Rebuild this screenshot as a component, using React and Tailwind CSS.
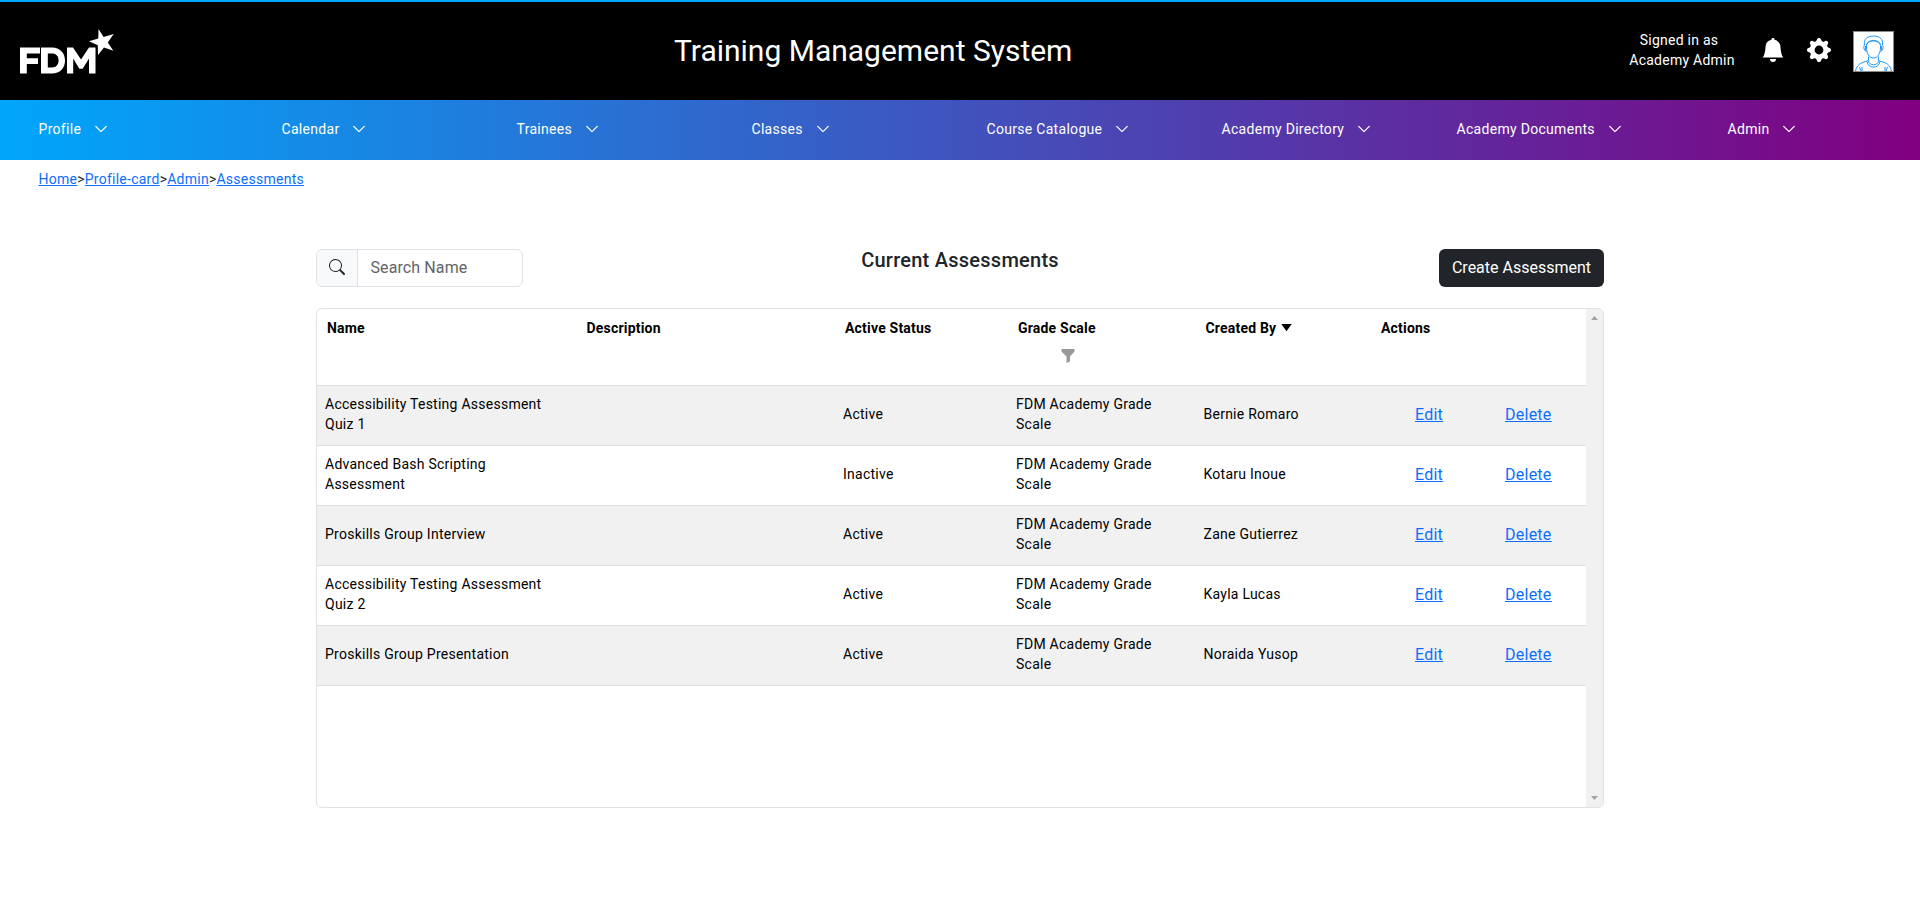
const NAV = [
  ['Profile', 'w-[243px]'],
  ['Calendar', 'w-[235px]'],
  ['Trainees', 'w-[235px]'],
  ['Classes', 'w-[235px]'],
  ['Course Catalogue', 'w-[235px]'],
  ['Academy Directory', 'w-[235px]'],
  ['Academy Documents', 'w-[271px]'],
  ['Admin', ''],
];

const ROWS = [
  ['Accessibility Testing Assessment Quiz 1', 'Active', 'Bernie Romaro'],
  ['Advanced Bash Scripting Assessment', 'Inactive', 'Kotaru Inoue'],
  ['Proskills Group Interview', 'Active', 'Zane Gutierrez'],
  ['Accessibility Testing Assessment Quiz 2', 'Active', 'Kayla Lucas'],
  ['Proskills Group Presentation', 'Active', 'Noraida Yusop'],
];

const COLS = 'grid grid-cols-[259.5px_258.5px_173px_187.5px_175.5px_215px]';

function Bootstrap({ size, className, children }) {
  return (
    <svg width={size} height={size} viewBox="0 0 16 16" fill="currentColor" className={className}>
      {children}
    </svg>
  );
}

function Logo() {
  return (
    <svg width="96" height="48" viewBox="0 0 96 48" className="mt-0.5 shrink-0" fill="#fff">
      <path d="M0 19.5H20V25.6H6.8V30.2H18V36H6.8V45.6H0Z" />
      <path fillRule="evenodd" d="M21 19.5H32C40 19.5 45 25 45 32.5S40 45.6 32 45.6H21ZM27.8 25.6V39.5H32C36 39.5 38.6 36.7 38.6 32.5S36 25.6 32 25.6Z" />
      <path d="M47 45.6V19.5H53L61 31.5L69 19.5H75.5V45.6H69V30.5L62.7 40.8H59.3L53.2 30.5V45.6Z" />
      <path d="M78.5 1L83.6 9L93.7 6L87.8 14.5L93.3 22.8L84 19.5L78 27L77.8 17.2L69 13.3L78.3 10.5Z" />
    </svg>
  );
}

function Avatar() {
  return (
    <svg width="41" height="41" viewBox="0 0 41 41" fill="none" stroke="#1e96f5" strokeWidth="1">
      <rect x="0.5" y="0.5" width="40" height="40" fill="#fff" stroke="#8a8a8a" />
      <path d="M11.5 14C10.500 8 14.500 5 20.500 5S30.500 8 29.500 14" />
      <path d="M13.500 16C13 12 16 9.500 20.500 9.500S28 12 27.500 16C27.500 22 25 27 20.500 27S13.500 22 13.500 16Z" />
      <path d="M13.500 14C15 8.500 26 8.500 27.500 14" />
      <path d="M12 14C10 14 10.500 20 13.500 20.500M29 14C31 14 30.500 20 27.500 20.500M12.500 15V19.500M28.500 15V19.500" />
      <path d="M15.500 25.500V29.500C12 31 4 31.500 2.500 40M25.500 25.500V29.500C29 31 37 31.500 38.500 40" />
      <path d="M15.500 30C16 35 25 35 25.500 30M14 30.500C15 38 26 38 27 30.500M9 36V40M32 36V40M6.500 36L8 40M34.500 36L33 40" />
    </svg>
  );
}

function Header() {
  return (
    <header className="flex h-[100px] items-center border-t-2 border-[#00a3ff] bg-black text-white">
      <div className="flex w-[674px] pl-5">
        <Logo />
      </div>
      <h1 className="w-[951px] text-[30px] leading-9 font-normal whitespace-nowrap">Training Management System</h1>
      <div className="flex items-center">
        <div className="w-[114px] pb-0.5 text-center text-sm leading-5 tracking-[0.25px]">
          <span className="pr-1.5">Signed in as</span>
          <br />
          Academy Admin
        </div>
        <Bootstrap size={24} className="mb-0.5 ml-[22px]">
          <path d="M8 16a2 2 0 0 0 2-2H6a2 2 0 0 0 2 2m.995-14.901a1 1 0 1 0-1.99 0A5 5 0 0 0 3 6c0 1.098-.5 6-2 7h14c-1.500-1-2-5.902-2-7 0-2.420-1.720-4.440-4.005-4.901" />
        </Bootstrap>
        <Bootstrap size={24} className="mb-0.5 ml-[22px]">
          <path d="M9.405 1.050c-.413-1.400-2.397-1.400-2.810 0l-.1.340a1.464 1.464 0 0 1-2.105.872l-.310-.170c-1.283-.698-2.686.705-1.987 1.987l.169.311c.446.820.023 1.841-.872 2.105l-.340.100c-1.400.413-1.400 2.397 0 2.810l.340.100a1.464 1.464 0 0 1 .872 2.105l-.170.310c-.698 1.283.705 2.686 1.987 1.987l.311-.169a1.464 1.464 0 0 1 2.105.872l.100.340c.413 1.400 2.397 1.400 2.810 0l.100-.340a1.464 1.464 0 0 1 2.105-.872l.310.170c1.283.698 2.686-.705 1.987-1.987l-.169-.311a1.464 1.464 0 0 1 .872-2.105l.340-.100c1.400-.413 1.400-2.397 0-2.810l-.340-.100a1.464 1.464 0 0 1-.872-2.105l.170-.310c.698-1.283-.705-2.686-1.987-1.987l-.311.169a1.464 1.464 0 0 1-2.105-.872zM8 10.930a2.929 2.929 0 1 1 0-5.860 2.929 2.929 0 0 1 0 5.858z" />
        </Bootstrap>
        <div className="ml-[22px]">
          <Avatar />
        </div>
      </div>
    </header>
  );
}

function Nav() {
  return (
    <nav className="flex h-[60px] items-center bg-[linear-gradient(90deg,#00a6fb,#800080)] pb-0.5 pl-[38.5px] text-sm tracking-[0.3px] text-white">
      {NAV.map(([label, width]) => (
        <div key={label} className={`flex shrink-0 items-center whitespace-nowrap ${width}`}>
          {label}
          <Bootstrap size={14} className="ml-[13px]">
            <path fillRule="evenodd" stroke="currentColor" strokeWidth="0.4" d="M1.646 4.646a.5.5 0 0 1 .708 0L8 10.293l5.646-5.647a.5.5 0 0 1 .708.708l-6 6a.5.5 0 0 1-.708 0l-6-6a.5.5 0 0 1 0-.708" />
          </Bootstrap>
        </div>
      ))}
    </nav>
  );
}

function Crumbs() {
  return (
    <div className="flex h-[89px] pt-[9px] pl-[38.5px] text-sm leading-[21px] tracking-[0.25px] text-[#212529]">
      <a className="text-[#0d6efd] underline">Home</a>
      <span>&gt;</span>
      <a className="text-[#0d6efd] underline">Profile-card</a>
      <span>&gt;</span>
      <a className="text-[#0d6efd] underline">Admin</a>
      <span>&gt;</span>
      <a className="text-[#0d6efd] underline">Assessments</a>
    </div>
  );
}

function Toolbar() {
  return (
    <div className="grid h-[59px] grid-cols-3 items-start">
      <div className="flex h-[38px] w-[207px] overflow-hidden rounded-md border border-[#dee2e6]">
        <div className="flex w-[41px] items-center justify-center border-r border-[#dee2e6] bg-[#f8f9fa] text-[#212529]">
          <Bootstrap size={16} className="mb-0.5">
            <path d="M11.742 10.344a6.500 6.500 0 1 0-1.397 1.398h-.001q.044.060.098.115l3.850 3.850a1 1 0 0 0 1.415-1.414l-3.850-3.850a1 1 0 0 0-.115-.1zM12 6.500a5.500 5.500 0 1 1-11 0 5.500 5.500 0 0 1 11 0" />
          </Bootstrap>
        </div>
        <span className="pl-[12.5px] text-base leading-[35px] tracking-[0.1px] text-[#5f6469]">Search Name</span>
      </div>
      <h2 className="text-center text-xl leading-[22px] font-medium tracking-[0.25px] text-[#212529]">Current Assessments</h2>
      <button className="h-[38px] w-[165px] justify-self-end rounded-md bg-[#212529] text-base text-white">Create Assessment</button>
    </div>
  );
}

function Table() {
  return (
    <section className="flex h-[500px] overflow-hidden rounded-md border border-[#dee2e6] text-sm text-black">
      <div className="flex-1">
        <div className={`${COLS} h-[77px] border-b border-[#dedede] pt-[9px] leading-5 font-bold tracking-[0.2px]`}>
          <div className="pl-2.5">Name</div>
          <div className="pl-2.5">Description</div>
          <div className="pl-2.5">Active Status</div>
          <div className="pl-2.5">
            Grade Scale
            <svg width="14" height="14" viewBox="0 0 14 14" className="mt-[11px] ml-[43px]" fill="#999">
              <path d="M0.500 0H13.500V2.500L9 7.500V12.500L5.500 14V7.500L0.500 2.500Z" />
            </svg>
          </div>
          <div className="flex pl-2.5">
            Created By
            <svg width="11" height="8" viewBox="0 0 11 8" className="mt-1.5 ml-[5px]">
              <path d="M0.300 0H10.700L5.500 7.200Z" />
            </svg>
          </div>
          <div className="pl-2.5">Actions</div>
        </div>
        {ROWS.map(([name, status, author]) => (
          <div key={name} className={`${COLS} h-[60px] items-center border-b border-[#dedede] pb-[3px] leading-5 tracking-[0.25px] odd:bg-white even:bg-[#f1f1f1]`}>
            <div className="pr-6 pl-2">{name}</div>
            <div />
            <div className="pl-2">{status}</div>
            <div className="pr-8 pl-2">FDM Academy Grade Scale</div>
            <div className="pl-2">{author}</div>
            <div className="flex pt-px pl-[44px] text-base leading-5 text-[#0d6efd] underline">
              <a className="w-[90px]">Edit</a>
              <a>Delete</a>
            </div>
          </div>
        ))}
      </div>
      <div className="flex w-[17px] flex-col items-center justify-between bg-[#f1f1f1] py-[7px]">
        <svg width="7" height="4" viewBox="0 0 7 4" fill="#a3a3a3">
          <path d="M0 4H7L3.500 0Z" />
        </svg>
        <svg width="7" height="4" viewBox="0 0 7 4" fill="#a3a3a3">
          <path d="M0 0H7L3.500 4Z" />
        </svg>
      </div>
    </section>
  );
}

export default function App() {
  return (
    <div className="h-[911px] w-[1920px] overflow-hidden bg-white font-[Roboto,sans-serif]">
      <Header />
      <Nav />
      <Crumbs />
      <main className="mx-auto w-[1288px]">
        <Toolbar />
        <Table />
      </main>
    </div>
  );
}
